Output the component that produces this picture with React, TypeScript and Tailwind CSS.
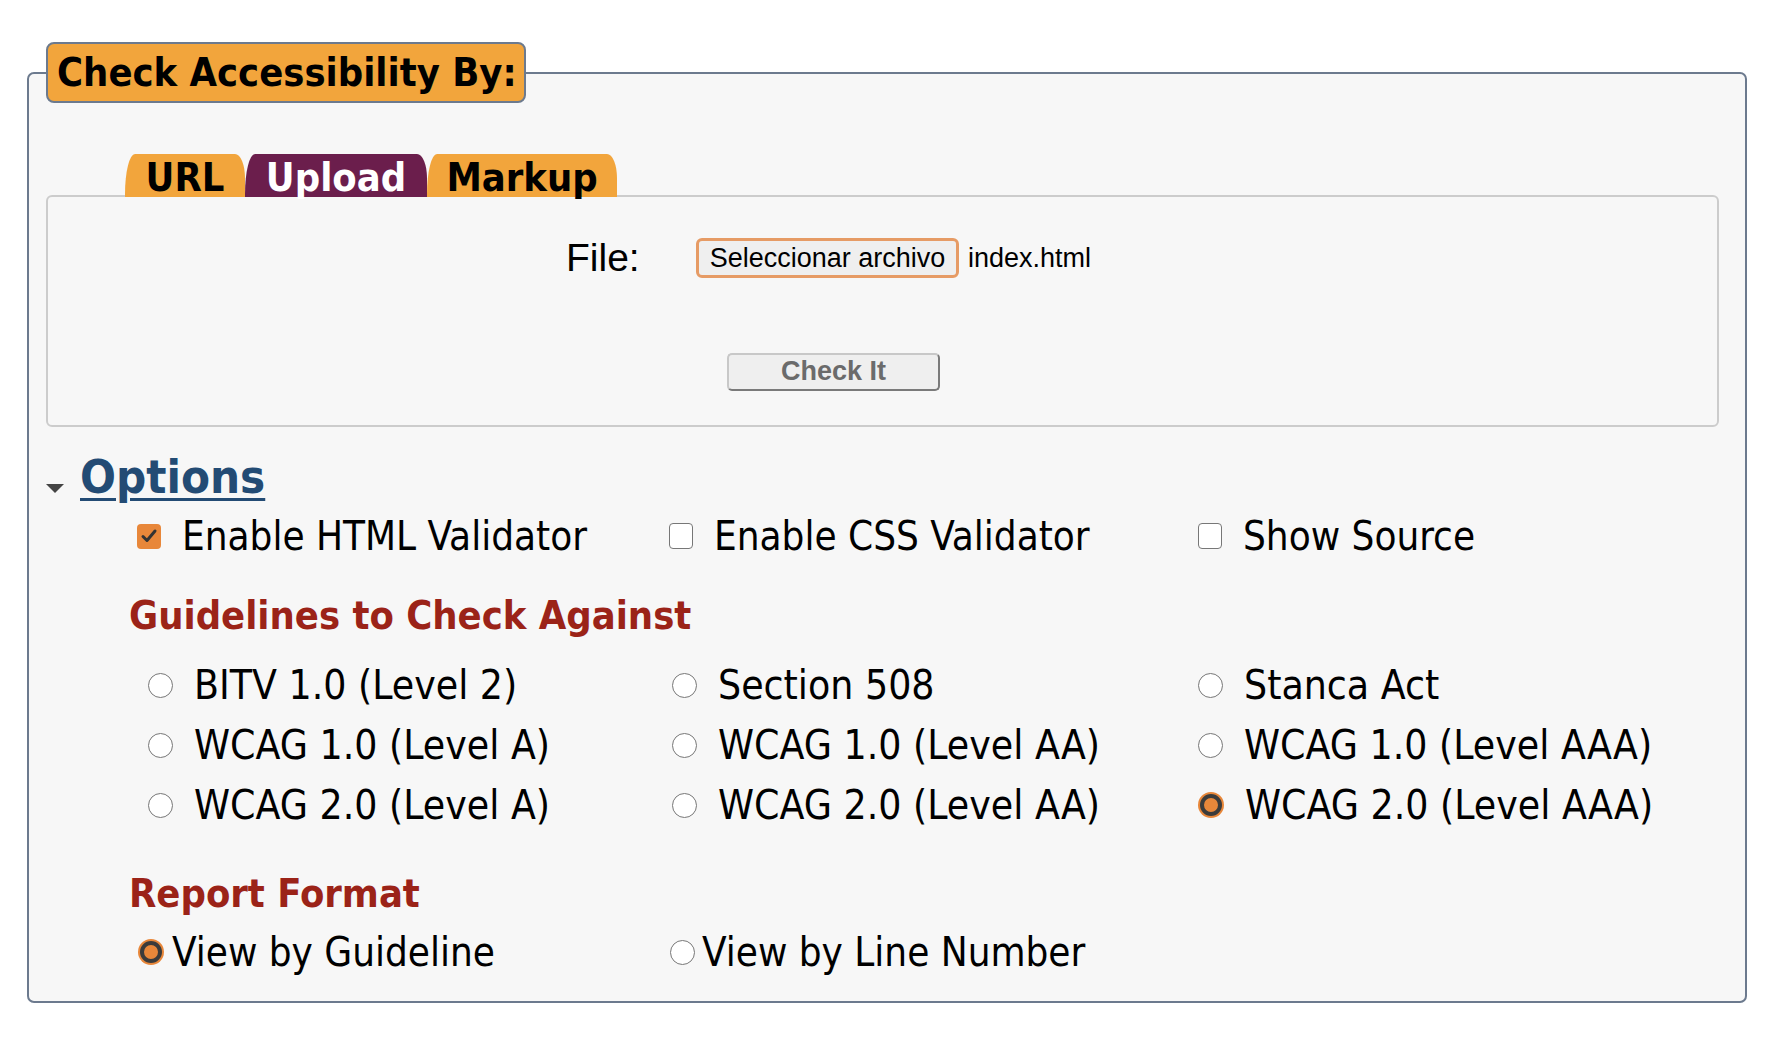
const sans = "font-['DejaVu_Sans_Condensed','DejaVu_Sans',sans-serif] [font-stretch:condensed]"
const arial = "font-['Liberation_Sans',Arial,sans-serif] [font-stretch:normal]"

const tabs = [
  { label: 'URL', width: 'w-[120px]', active: false },
  { label: 'Upload', width: 'w-[182px]', active: true },
  { label: 'Markup', width: 'w-[190px]', active: false },
]

const checks = [
  { label: 'Enable HTML Validator', checked: true },
  { label: 'Enable CSS Validator', checked: false },
  { label: 'Show Source', checked: false },
]

const guidelines = [
  'BITV 1.0 (Level 2)',
  'Section 508',
  'Stanca Act',
  'WCAG 1.0 (Level A)',
  'WCAG 1.0 (Level AA)',
  'WCAG 1.0 (Level AAA)',
  'WCAG 2.0 (Level A)',
  'WCAG 2.0 (Level AA)',
  'WCAG 2.0 (Level AAA)',
]

function Radio({ checked }: { checked: boolean }) {
  if (checked) {
    return (
      <span className="block h-[26px] w-[26px] shrink-0 rounded-full bg-[#e8873a] p-[2px]">
        <span className="block h-full w-full rounded-full border-[4px] border-[#3b3b3b] bg-[#e8873a]" />
      </span>
    )
  }
  return <span className="block h-[25px] w-[25px] shrink-0 rounded-full border-[1.5px] border-[#777] bg-white" />
}

function Checkbox({ checked }: { checked: boolean }) {
  if (checked) {
    return (
      <span className="flex h-[25px] w-[24px] shrink-0 items-center justify-center rounded-[4px] bg-[#e8873a]">
        <svg width="18" height="18" viewBox="0 0 18 18">
          <path d="M3 9.5 L7 13.5 L15 4" fill="none" stroke="#333" strokeWidth="3" strokeLinecap="round" strokeLinejoin="round" />
        </svg>
      </span>
    )
  }
  return <span className="block h-[26px] w-[24px] shrink-0 rounded-[4px] border-[1.5px] border-[#777] bg-white" />
}

export default function App() {
  return (
    <div className={`min-h-screen bg-white pt-[42px] pl-[27px] pr-[39px] text-black ${sans}`}>
      <fieldset className="m-0 rounded-[7px] border-2 border-[#6c7a8e] bg-[#f7f7f7] pr-[26px] pb-[29px] pl-[17px]">
        <legend className="h-[61px] rounded-[8px] border-2 border-[#6c7a8e] bg-[#f2a53c] pr-[7px] pl-[9px] text-[39.5px] leading-[57px] font-bold">
          Check Accessibility By:
        </legend>

        <div className="relative z-10 mt-[51px] -mb-[2px] ml-[79px] flex h-[43px]">
          {tabs.map((tab) => (
            <div
              key={tab.label}
              className={`flex h-[43px] items-end justify-center rounded-tl-[10px_40px] rounded-tr-[10px_24px] pb-[1px] text-[39.5px] leading-[38px] font-bold ${tab.width} ${
                tab.active ? 'bg-[#6b1e4c] text-white' : 'bg-[#f2a53c] text-black'
              }`}
            >
              {tab.label}
            </div>
          ))}
        </div>

        <div className="h-[232px] rounded-[6px] border-2 border-[#cccccc] bg-[#f7f7f7]">
          <div className={`flex items-center pt-[41px] pl-[518px] ${arial}`}>
            <span className="w-[130px] text-[39px] leading-[40px]">File:</span>
            <span className="flex h-[40px] w-[263px] items-center justify-center rounded-[6px] border-[3px] border-[#e69b65] bg-[#efefef] text-[27px]">
              Seleccionar archivo
            </span>
            <span className="ml-[9px] text-[27px]">index.html</span>
          </div>
          <button
            type="button"
            className={`mt-[74px] ml-[679px] flex h-[38px] w-[213px] items-center justify-center rounded-[5px] border-2 border-t-[#c8c8c8] border-r-[#7a7a7a] border-b-[#7a7a7a] border-l-[#c8c8c8] bg-[#efefef] text-[27px] font-bold text-[#6b6b6b] ${arial}`}
          >
            Check It
          </button>
        </div>

        <div className="mt-[26px] flex h-[47px] items-end">
          <svg width="18" height="9" viewBox="0 0 18 9" className="mb-[7px] shrink-0">
            <polygon points="0,0 18,0 9,9" fill="#444" />
          </svg>
          <a href="#" className="ml-[16px] text-[47px] leading-[47px] font-bold text-[#234b74] underline decoration-[3px] underline-offset-[5px]">
            Options
          </a>
        </div>

        <div className="mt-[16px] grid grid-cols-[532px_529px_1fr] pl-[91px]">
          {checks.map((c) => (
            <label key={c.label} className="flex h-[40px] items-center gap-[21px] text-[40px] leading-[40px]">
              <Checkbox checked={c.checked} />
              <span>{c.label}</span>
            </label>
          ))}
        </div>

        <h2 className="mt-[39px] pl-[83px] text-[39.5px] leading-[40px] font-bold text-[#9b2318]">Guidelines to Check Against</h2>

        <div className="mt-[20px] grid auto-rows-[60px] grid-cols-[524px_526px_1fr] pl-[102px]">
          {guidelines.map((g) => (
            <label key={g} className="flex items-center gap-[21px] text-[40.5px] leading-[40px]">
              <Radio checked={g === 'WCAG 2.0 (Level AAA)'} />
              <span>{g}</span>
            </label>
          ))}
        </div>

        <h2 className="mt-[38px] pl-[83px] text-[39.5px] leading-[40px] font-bold text-[#9b2318]">Report Format</h2>

        <div className="mt-[19px] grid grid-cols-[532px_1fr] pl-[92px]">
          <label className="flex h-[40px] items-center gap-[8px] text-[40px] leading-[40px]">
            <Radio checked />
            <span>View by Guideline</span>
          </label>
          <label className="flex h-[40px] items-center gap-[7px] text-[40px] leading-[40px]">
            <Radio checked={false} />
            <span>View by Line Number</span>
          </label>
        </div>
      </fieldset>
    </div>
  )
}
